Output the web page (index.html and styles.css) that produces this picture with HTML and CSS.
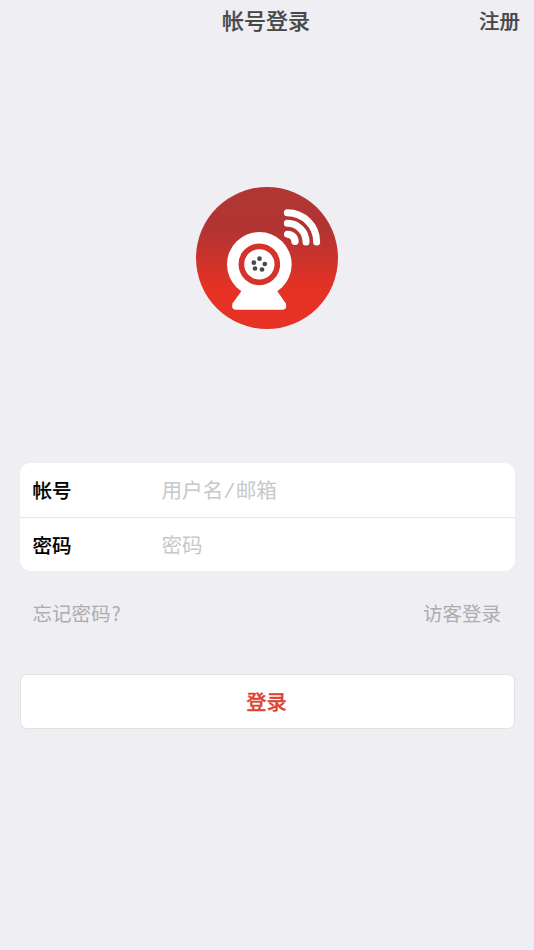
FILE: index.html
```
<!DOCTYPE html>
<html lang="zh-CN">
<head>
<meta charset="utf-8">
<meta name="viewport" content="width=device-width, initial-scale=1">
<title>帐号登录</title>
<link rel="stylesheet" href="styles.css">
</head>
<body>
<header class="navbar">
  <h1 class="title">帐号登录</h1>
  <a class="register">注册</a>
</header>
<main class="content">
  <svg class="logo" viewBox="27 27 426 426" aria-hidden="true">
    <defs>
      <linearGradient id="disc" x1="0" y1="0" x2="0" y2="1">
        <stop offset="0" stop-color="#b03634"/>
        <stop offset=".3" stop-color="#b23432"/>
        <stop offset=".72" stop-color="#e63224"/>
        <stop offset="1" stop-color="#e63224"/>
      </linearGradient>
    </defs>
    <circle cx="240" cy="240" r="213" fill="url(#disc)"/>
    <path d="M164 338H270L296 376Q302 395 286 395H147Q131 395 137 376Z" fill="#fff"/>
    <circle cx="217" cy="259" r="97" fill="#fff"/>
    <circle cx="217" cy="259" r="54" fill="none" stroke="#d3332a" stroke-width="17"/>
    <g fill="#484848">
      <circle cx="217.500" cy="242" r="7"/>
      <circle cx="233.500" cy="258" r="7"/>
      <circle cx="225" cy="274.500" r="7"/>
      <circle cx="204" cy="271.500" r="7"/>
      <circle cx="200.500" cy="254" r="7"/>
    </g>
    <g fill="none" stroke="#fff" stroke-width="21" stroke-linecap="round">
      <path d="M301 104A88 88 0 0 1 389 192"/>
      <path d="M301 136A56 56 0 0 1 357 192"/>
    </g>
    <path d="M301 158C321 157 336 173 335 191C334 205 314 204 313 192C313 184 309 180 301 179C287 178 288 158 301 158Z" fill="#fff"/>
  </svg>
  <form class="login">
    <div class="fields">
      <label class="row"><span class="label">帐号</span><input class="input" type="text" placeholder="用户名/邮箱"></label>
      <label class="row"><span class="label">密码</span><input class="input" type="password" placeholder="密码"></label>
    </div>
    <div class="links"><a>忘记密码<span class="mark">?</span></a><a>访客登录</a></div>
    <button class="submit" type="button">登录</button>
  </form>
</main>
</body>
</html>
```

FILE: styles.css
```
* { box-sizing: border-box; }
body {
  margin: 0;
  min-height: 950px;
  background: #eeeef3;
  font-family: "Noto Sans CJK SC", sans-serif;
  line-height: 1;
}
.navbar {
  display: grid;
  grid-template-columns: 1fr auto 1fr;
  align-items: center;
  height: 42px;
  padding: 0 14px 3px;
  color: #484848;
}
.title {
  grid-column: 2;
  margin: 0 1px 2px -1px;
  font-size: 22px;
  font-weight: 500;
  -webkit-text-stroke: .2px currentColor;
}
.register {
  justify-self: end;
  margin-top: 1px;
  font-size: 20.5px;
  font-weight: 500;
  -webkit-text-stroke: .2px currentColor;
}
.content {
  display: flex;
  flex-direction: column;
  align-items: center;
  padding: 145px 19.5px 0;
}
.logo { width: 142px; height: 142px; }
.login { width: 100%; margin-top: 134px; }
.fields {
  overflow: hidden;
  border-radius: 11px;
  background: #fff;
}
.row {
  display: flex;
  align-items: center;
  height: 53px;
  padding: 0 13px;
}
.row:first-child { height: 55px; border-bottom: 1px solid #e6e6e8; }
.label {
  width: 129px;
  color: #000;
  font-size: 19.5px;
  font-weight: 500;
  -webkit-text-stroke: .15px currentColor;
}
.input {
  flex: 1;
  min-width: 0;
  height: 36px;
  padding: 5px 0 0;
  border: 0;
  outline: 0;
  background: transparent;
  font: 400 20.6px "Liberation Mono", "Noto Sans CJK SC", sans-serif;
}
.input::placeholder { color: #c8c8ca; opacity: 1; }
.links {
  display: flex;
  justify-content: space-between;
  align-items: center;
  height: 84px;
  padding: 0 13.5px 0 13px;
  color: #adadaf;
  font-size: 19.5px;
}
.mark { margin-left: 1px; }
.submit {
  display: block;
  width: 100%;
  height: 55px;
  margin-top: 19px;
  padding: 0 1px 0 0;
  border: 1.5px solid #e2e2e3;
  border-radius: 7px;
  background: #fff;
  color: #dc4331;
  font: 500 20.3px/1 "Noto Sans CJK SC", sans-serif;
  -webkit-text-stroke: .3px currentColor;
}
```
